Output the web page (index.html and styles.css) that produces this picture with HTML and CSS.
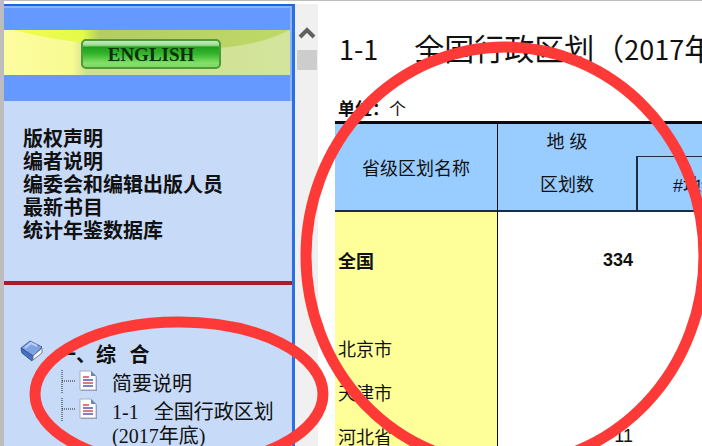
FILE: index.html
```html
<!DOCTYPE html>
<html lang="zh-CN">
  <head>
    <meta charset="utf-8">
    <title>1-1 全国行政区划</title>
    <link rel="stylesheet" href="styles.css">
  </head>
  <body>
    <div class="frames">
      <div class="sidebar">
        <div class="banner">
          <svg class="bannerArt" viewBox="0 0 286 45" preserveAspectRatio="none" aria-hidden="true">
            <defs>
              <linearGradient id="paper">
                <stop offset="0" stop-color="#fdfda0"/>
                <stop offset="0.24" stop-color="#f8fa92"/>
                <stop offset="0.29" stop-color="#cfdf8e"/>
                <stop offset="1" stop-color="#d3e49c"/>
              </linearGradient>
              <linearGradient id="wave">
                <stop offset="0" stop-color="#f2fb50"/>
                <stop offset="0.25" stop-color="#e4fb48"/>
                <stop offset="0.31" stop-color="#b4cc60"/>
                <stop offset="1" stop-color="#bfd968"/>
              </linearGradient>
            </defs>
            <rect width="286" height="45" fill="url(#paper)"/>
            <path d="M10 0H286Q250 18 196 19Q70 17 10 0Z" fill="url(#wave)"/>
          </svg>
          <a class="english" href="#">ENGLISH</a>
        </div>
        <ul class="links">
          <li><a href="#">版权声明</a></li>
          <li><a href="#">编者说明</a></li>
          <li><a href="#">编委会和编辑出版人员</a></li>
          <li><a href="#">最新书目</a></li>
          <li><a href="#">统计年鉴数据库</a></li>
        </ul>
        <div class="tree">
          <div class="chapter">
            <svg width="24" height="22" viewBox="0 0 24 22" aria-hidden="true">
              <path d="M1 8L10 1L22 7L13 16Z" fill="#7fa3e2" stroke="#41669f"/>
              <path d="M1 8L2 13L12 21L13 16Z" fill="#456fc0" stroke="#31589c"/>
              <path d="M13 16L22 8V13L13 20Z" fill="#f4f6fc" stroke="#707c98"/>
              <path d="M5 8L11 3L17 6" fill="none" stroke="#b7cef5" stroke-width="2"/>
            </svg>
            <a href="#">一、综&nbsp;&nbsp;&nbsp;合</a>
          </div>
          <div class="leaf">
            <svg width="43" height="28" viewBox="0 0 43 28" aria-hidden="true">
              <path d="M1 2V26M1 13H14" fill="none" stroke="#222" stroke-dasharray="1 1"/>
              <path d="M20 4H31L36 9V23H20Z" fill="#8a8ca8"/>
              <path d="M19 3H30L35 8V22H19Z" fill="#fff" stroke="#a9abc8"/>
              <path d="M30 3V8H35Z" fill="#6f84b8"/>
              <path d="M22 9H28M22 15H32" stroke="#e07880" stroke-width="2"/>
              <path d="M22 12H32M22 18H32" stroke="#7c83c2" stroke-width="2"/>
            </svg>
            <a href="#">简要说明</a>
          </div>
          <div class="leaf">
            <svg width="43" height="28" viewBox="0 0 43 28" aria-hidden="true">
              <path d="M1 2V26M1 13H14" fill="none" stroke="#222" stroke-dasharray="1 1"/>
              <path d="M20 4H31L36 9V23H20Z" fill="#8a8ca8"/>
              <path d="M19 3H30L35 8V22H19Z" fill="#fff" stroke="#a9abc8"/>
              <path d="M30 3V8H35Z" fill="#6f84b8"/>
              <path d="M22 9H28M22 15H32" stroke="#e07880" stroke-width="2"/>
              <path d="M22 12H32M22 18H32" stroke="#7c83c2" stroke-width="2"/>
            </svg>
            <a href="#">1-1&ensp; 全国行政区划<br>(2017年底)</a>
          </div>
        </div>
      </div>

      <div class="scrollbar">
        <svg width="18" height="14" viewBox="0 0 18 14" aria-hidden="true">
          <path d="M2 11L9 4L16 11" fill="none" stroke="#606060" stroke-width="4"/>
        </svg>
        <div class="thumb"></div>
      </div>

      <div class="content">
        <h1><span class="chapterNo">1-1</span>　全国行政区划（<span>2017</span>年底）</h1>
        <div class="unit"><b>单位：</b>个</div>
        <table>
          <thead>
            <tr class="top">
              <th class="name" rowspan="2">省级区划名称</th>
              <th class="num">地&nbsp;级</th>
              <th class="sub"></th>
            </tr>
            <tr class="bottom">
              <th class="num">区划数</th>
              <th class="sub boxed">#地级市</th>
            </tr>
          </thead>
          <tbody>
            <tr class="gap"><td></td><td></td><td></td></tr>
            <tr class="total"><td>全国</td><td>334</td><td></td></tr>
            <tr><td></td><td></td><td></td></tr>
            <tr><td>北京市</td><td></td><td></td></tr>
            <tr><td>天津市</td><td></td><td></td></tr>
            <tr><td>河北省</td><td>11</td><td></td></tr>
          </tbody>
        </table>
      </div>
    </div>

    <svg class="marks" width="702" height="446" viewBox="0 0 702 446" aria-hidden="true">
      <ellipse cx="179" cy="394" rx="144" ry="72"/>
      <ellipse cx="505" cy="256" rx="199" ry="209"/>
    </svg>
  </body>
</html>
```

FILE: styles.css
```css
* {
    box-sizing: border-box;
}
body {
    margin: 0;
    height: 100vh;
    overflow: hidden;
    padding-top: 3px;
    border-top: 1px solid #bdbdbd;
    border-left: 4px solid #bdbdbd;
    background: #fff;
    color: #111;
    font-family: "Liberation Sans", "Noto Sans CJK SC", sans-serif;
}
a {
    color: inherit;
    text-decoration: none;
}
.frames {
    display: flex;
    height: 100%;
}

/* left menu */
.sidebar {
    flex: 0 0 291px;
    overflow: hidden;
    border-top: 2px solid #1c66dc;
    border-right: 3px solid #2a70e4;
    background: #c7daf8;
}
.banner {
    position: relative;
    display: flex;
    justify-content: center;
    align-items: center;
    height: 95px;
    padding: 24px 2px 26px 0;
    border-top: 2px solid #8cb4fb;
    border-right: 2px solid #8cb4fb;
    background: #6699ff;
    background-clip: padding-box;
}
.bannerArt {
    position: absolute;
    left: 0;
    top: 22px;
    width: 100%;
    height: 45px;
}
.english {
    position: relative;
    width: 140px;
    height: 30px;
    margin-left: 10px;
    border: 2px solid #4c9a3c;
    border-radius: 5px;
    background: linear-gradient(#c4eebc 0, #9bdc90 16%, #1fa01c 24%, #35b52c 50%, #84e066 85%, #7fd868);
    color: #0c3008;
    font: bold 19px/28px "Liberation Serif", serif;
    text-align: center;
}
.links {
    list-style: none;
    margin: 0;
    padding: 27px 0 38px 19px;
    border-bottom: 4px solid #a81c24;
    font-size: 20px;
    font-weight: bold;
    line-height: 23px;
}
.tree {
    padding: 55px 0 0 16px;
    font-family: "Liberation Serif", "Noto Sans CJK SC", serif;
    font-size: 20px;
}
.chapter {
    display: flex;
    gap: 12px;
    height: 28px;
    font-family: "Noto Sans CJK SC", sans-serif;
    font-weight: bold;
    line-height: 28px;
}
.leaf {
    display: flex;
    padding-left: 41px;
    gap: 8px;
    line-height: 24px;
}
.leaf a {
    padding-top: 4px;
    white-space: nowrap;
}

.scrollbar {
    display: flex;
    flex: 0 0 23px;
    flex-direction: column;
    align-items: center;
    gap: 10px;
    padding-top: 22px;
    background: #f0f0f0;
}
.thumb {
    width: 20px;
    height: 20px;
    background: #cdcdcd;
}

/* right page */
.content {
    flex: 1;
    min-width: 0;
    overflow: hidden;
    padding: 21px 0 0 17px;
    white-space: nowrap;
}
h1 {
    margin: 0;
    padding-left: 4px;
    font: 30px/44px "Noto Sans CJK SC", sans-serif;
}
h1 span {
    font-size: 27px;
}
.chapterNo {
    padding-right: 6px;
}
.unit {
    padding: 28px 0 0 3px;
    font-size: 17px;
    line-height: 22px;
}
table {
    width: 440px;
    table-layout: fixed;
    border-collapse: separate;
    border-spacing: 0;
    border-top: 3px solid #0a0a14;
    font-size: 18px;
}
th,
td {
    padding: 0 3px;
}
th {
    background: #99ccff;
    font-weight: normal;
}
.name {
    width: 163px;
}
.num {
    width: 138px;
}
.top {
    height: 32px;
}
.bottom {
    height: 56px;
}
.name,
.bottom th {
    border-bottom: 2px solid #1c2c44;
}
.name,
td:first-child {
    border-right: 1px solid #111;
}
.bottom .boxed {
    padding-left: 35px;
    border-top: 1px solid #1c2c44;
    border-left: 2px solid #1c2c44;
    text-align: left;
}
td {
    height: 44px;
    text-align: right;
}
td:first-child {
    background: #ffff99;
    text-align: left;
}
.gap td {
    height: 26px;
}
.total {
    font-weight: bold;
}

/* red pen circles */
.marks {
    position: absolute;
    left: 0;
    top: 0;
    pointer-events: none;
}
.marks ellipse {
    fill: none;
    stroke: #fd3a38;
    stroke-width: 11;
}
```
